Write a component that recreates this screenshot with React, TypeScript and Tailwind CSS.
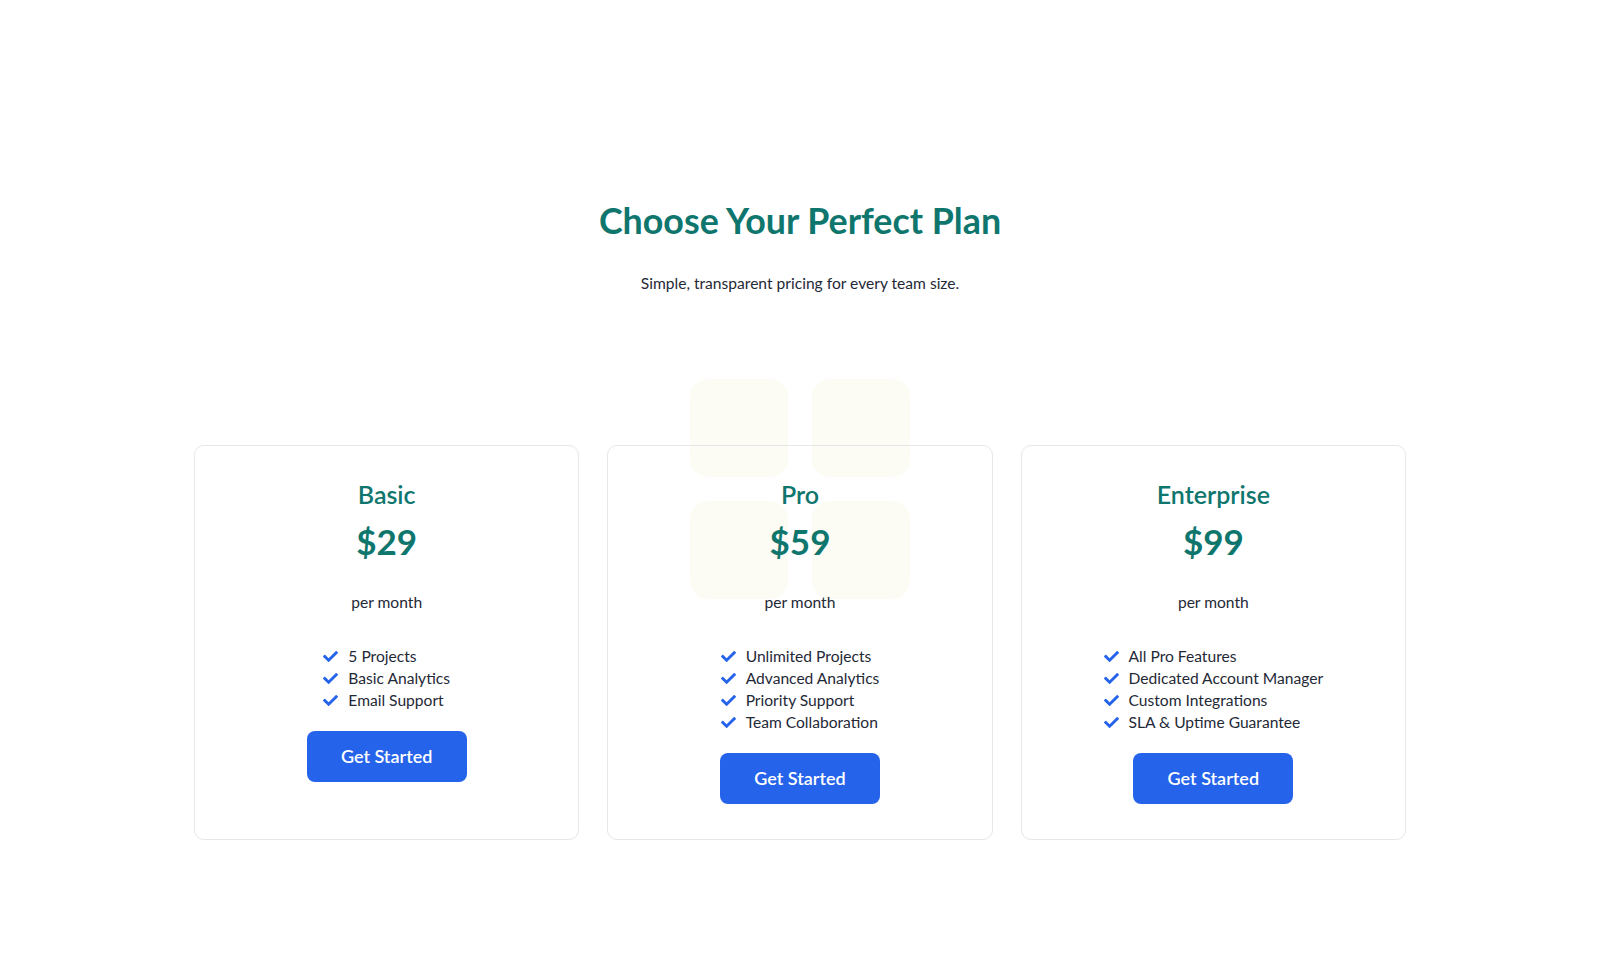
import { FaCheck } from "react-icons/fa";

interface Plan {
  name: string;
  price: string;
  features: string[];
}

const plans: Plan[] = [
  { name: "Basic", price: "$29", features: ["5 Projects", "Basic Analytics", "Email Support"] },
  {
    name: "Pro",
    price: "$59",
    features: ["Unlimited Projects", "Advanced Analytics", "Priority Support", "Team Collaboration"],
  },
  {
    name: "Enterprise",
    price: "$99",
    features: ["All Pro Features", "Dedicated Account Manager", "Custom Integrations", "SLA & Uptime Guarantee"],
  },
];

function PlanCard({ plan }: { plan: Plan }) {
  return (
    <div className="flex h-full flex-col items-center rounded-[10px] border border-[#e5e7eb] px-6 pt-[33px] pb-[35px]">
      <h3 className="text-[25px] leading-[30px] font-semibold text-[#0f766e]">{plan.name}</h3>
      <div className="mt-[10px] text-[35px] leading-[44px] font-bold text-[#0f766e]">{plan.price}</div>
      <p className="mt-[29px] text-[15.6px] leading-[20px] text-[#1f2937]">per month</p>
      <ul className="mt-[34px] flex flex-col gap-[2px]">
        {plan.features.map((f) => (
          <li key={f} className="flex items-center gap-[10px] text-[15.6px] leading-[20px] text-[#1f2937]">
            <FaCheck className="h-[15px] w-[15px] text-[#2563eb]" />
            {f}
          </li>
        ))}
      </ul>
      <button className="mt-[21px] h-[51px] w-[160px] rounded-lg bg-[#2563eb] text-[18px] font-semibold text-white">
        Get Started
      </button>
    </div>
  );
}

export default function App() {
  return (
    <div className="min-h-screen bg-white font-['Lato',sans-serif]">
      <section className="flex flex-col items-center pt-[199px]">
        <h1 className="text-[35.8px] leading-[44px] font-bold text-[#0f766e]">Choose Your Perfect Plan</h1>
        <p className="mt-[30px] text-[15.6px] leading-[20px] text-[#1f2937]">
          Simple, transparent pricing for every team size.
        </p>
        <div className="relative mt-[152px] grid w-[1212px] grid-cols-3 gap-[28px]">
          {/* faint decorative tiles behind the middle card */}
          <div className="absolute left-[496px] top-[-66px] grid grid-cols-2 gap-[24px]">
            <div className="h-[98px] w-[98px] rounded-[18px] bg-[#fdfcf4]" />
            <div className="h-[98px] w-[98px] rounded-[18px] bg-[#fdfcf4]" />
            <div className="h-[98px] w-[98px] rounded-[18px] bg-[#fdfcf4]" />
            <div className="h-[98px] w-[98px] rounded-[18px] bg-[#fdfcf4]" />
          </div>
          {plans.map((p) => (
            <div key={p.name} className="relative">
              <PlanCard plan={p} />
            </div>
          ))}
        </div>
      </section>
    </div>
  );
}
